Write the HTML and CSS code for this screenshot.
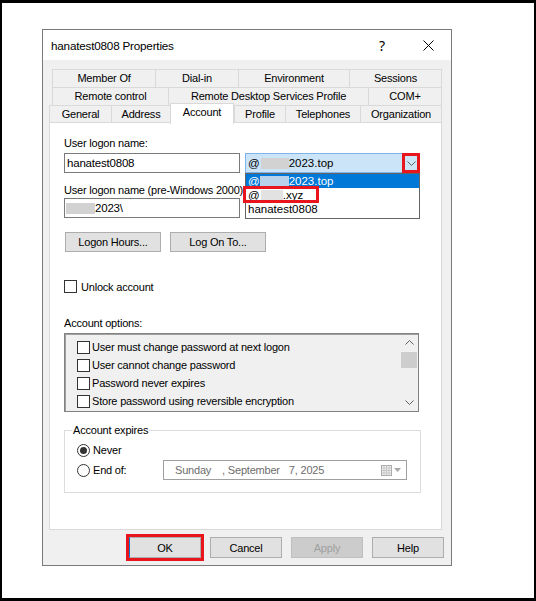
FILE: index.html
```html
<!DOCTYPE html>
<html lang="en">
<head>
    <meta charset="UTF-8">
    <meta name="viewport" content="width=device-width, initial-scale=1.0">
    <title>hanatest0808 Properties</title>
    <link rel="stylesheet" href="styles.css">
</head>
<body>
    <div class="screen">
        <div class="dialog">
            <div class="titlebar">
                <span class="title">hanatest0808 Properties</span>
                <span class="title-btn help">?</span>
                <span class="title-btn">
                    <svg width="11" height="11" viewBox="0 0 11 11"><path d="M0.5 0.5 L10.5 10.5 M10.5 0.5 L0.5 10.5" stroke="#000" stroke-width="1" fill="none"/></svg>
                </span>
            </div>

            <div class="body">
                <div class="tabs">
                    <div class="tab-row row1">
                        <div class="tab">Member Of</div>
                        <div class="tab">Dial-in</div>
                        <div class="tab">Environment</div>
                        <div class="tab">Sessions</div>
                    </div>
                    <div class="tab-row row2">
                        <div class="tab">Remote control</div>
                        <div class="tab">Remote Desktop Services Profile</div>
                        <div class="tab">COM+</div>
                    </div>
                    <div class="tab-row row3">
                        <div class="tab">General</div>
                        <div class="tab">Address</div>
                        <div class="tab active">Account</div>
                        <div class="tab">Profile</div>
                        <div class="tab">Telephones</div>
                        <div class="tab">Organization</div>
                    </div>
                </div>

                <div class="panel">
                    <div class="label">User logon name:</div>
                    <div class="pair">
                        <div class="textbox">hanatest0808</div>
                        <div class="combo">
                            <span>@</span><span class="blur blur-combo"></span><span>2023.top</span>
                            <span class="combo-arrow">
                                <svg width="9" height="5" viewBox="0 0 9 5"><path d="M0.5 0.5 L4.5 4.5 L8.5 0.5" stroke="#606060" fill="none"/></svg>
                            </span>
                            <div class="combo-list">
                                <div class="opt selected">@<span class="blur blur-sel"></span>2023.top</div>
                                <div class="opt">@<span class="blur blur-opt"></span>.xyz<span class="mark"></span></div>
                                <div class="opt">hanatest0808</div>
                            </div>
                        </div>
                    </div>

                    <div class="label label-second">User logon name (pre-Windows 2000):</div>
                    <div class="pair pair-second">
                        <div class="textbox"><span class="blur blur-pre"></span>2023\</div>
                        <div class="textbox textbox-right"></div>
                    </div>

                    <div class="btn-row">
                        <button class="btn btn-wide">Logon Hours...</button>
                        <button class="btn btn-wide">Log On To...</button>
                    </div>

                    <div class="check unlock"><span class="cbox"></span>Unlock account</div>

                    <div class="label label-options">Account options:</div>
                    <div class="listbox">
                        <div class="list-items">
                            <div class="check list-item"><span class="cbox"></span>User must change password at next logon</div>
                            <div class="check list-item"><span class="cbox"></span>User cannot change password</div>
                            <div class="check list-item"><span class="cbox"></span>Password never expires</div>
                            <div class="check list-item"><span class="cbox"></span>Store password using reversible encryption</div>
                        </div>
                        <div class="scrollbar">
                            <div class="sb-btn">
                                <svg width="9" height="5" viewBox="0 0 9 5"><path d="M0.5 4.5 L4.5 0.5 L8.5 4.5" stroke="#606060" fill="none"/></svg>
                            </div>
                            <div class="sb-thumb"></div>
                            <div class="sb-track"></div>
                            <div class="sb-btn">
                                <svg width="9" height="5" viewBox="0 0 9 5"><path d="M0.5 0.5 L4.5 4.5 L8.5 0.5" stroke="#606060" fill="none"/></svg>
                            </div>
                        </div>
                    </div>

                    <fieldset class="expires">
                        <legend>Account expires</legend>
                        <div class="radio-row first">
                            <span class="radio on"></span>Never
                        </div>
                        <div class="radio-row">
                            <span class="radio-label"><span class="radio"></span>End of:</span>
                            <div class="datebox">
                                <span class="d-day">Sunday</span>
                                <span class="d-month">, September</span>
                                <span class="d-date">7, 2025</span>
                                <span class="d-icon">
                                    <svg width="11" height="11" viewBox="0 0 11 11">
                                        <rect x="0.5" y="0.5" width="10" height="10" fill="#f4f4f4" stroke="#a8a8a8"/>
                                        <path d="M0.5 3 H10.5 M0.5 5.5 H10.5 M0.5 8 H10.5 M3 0.5 V10.5 M5.5 0.5 V10.5 M8 0.5 V10.5" stroke="#c4c4c4"/>
                                    </svg>
                                    <svg width="7" height="4" viewBox="0 0 7 4"><path d="M0 0 H7 L3.5 4 Z" fill="#a8a8a8"/></svg>
                                </span>
                            </div>
                        </div>
                    </fieldset>
                </div>

                <div class="actions">
                    <button class="btn btn-ok">OK</button>
                    <button class="btn">Cancel</button>
                    <button class="btn" disabled>Apply</button>
                    <button class="btn">Help</button>
                </div>
            </div>
        </div>
    </div>
</body>
</html>
```

FILE: styles.css
```css
* {
    box-sizing: border-box;
    margin: 0;
    padding: 0;
}

body {
    background: #fff;
    font-family: "Liberation Sans", Arial, sans-serif;
    font-size: 11px;
    letter-spacing: -0.2px;
    color: #000;
}

.screen {
    width: 536px;
    height: 601px;
    border: solid #000;
    border-width: 3px 2px 3px 2px;
    padding: 26px 0 0 40px;
    background: #fff;
}

.dialog {
    width: 410px;
    height: 537px;
    border: 1px solid #7a7a7a;
    background: #f0f0f0;
    display: flex;
    flex-direction: column;
}

.titlebar {
    height: 30px;
    background: #fff;
    display: flex;
    align-items: center;
}

.title {
    flex: 1;
    padding-left: 8px;
    font-size: 11.7px;
}

.title-btn {
    width: 46px;
    height: 30px;
    display: flex;
    align-items: center;
    justify-content: center;
}

.help {
    font-family: "Noto Sans", sans-serif;
    font-size: 14px;
}

.body {
    flex: 1;
    padding: 9px 9px 7px 6px;
    display: flex;
    flex-direction: column;
}

/* tabs */
.tab-row {
    display: grid;
    height: 18px;
}

.row1 {
    grid-template-columns: 103px 83px 111px 93px;
    margin-left: 3px;
}

.row2 {
    grid-template-columns: 116px 200px 74px;
    margin-left: 3px;
}

.row3 {
    grid-template-columns: 62px 59px 64px 51px 75px 82px;
    height: 17px;
}

.tab {
    border-top: 1px solid #d9d9d9;
    border-left: 1px solid #d9d9d9;
    background: #f0f0f0;
    text-align: center;
    line-height: 17px;
    white-space: nowrap;
}

.tab:last-child {
    border-right: 1px solid #d9d9d9;
}

.tab.active {
    background: #fff;
    margin-top: -2px;
    margin-bottom: -1px;
    border-right: 1px solid #d9d9d9;
    position: relative;
    z-index: 1;
}

.panel {
    height: 408px;
    background: #fff;
    border: 1px solid #d9d9d9;
    padding: 13px 0 0 14px;
}

.label {
    height: 14px;
    line-height: 14px;
    white-space: nowrap;
}

.label-second {
    margin-top: 10px;
}

.label-options {
    margin-top: 22px;
}

.pair {
    display: flex;
    gap: 5px;
    margin-top: 3px;
}

.pair-second {
    margin-top: 1px;
}

.textbox {
    width: 176px;
    height: 20px;
    border: 1px solid #7a7a7a;
    padding-left: 2px;
    line-height: 18px;
    display: flex;
    align-items: center;
    background: #fff;
    font-size: 11.5px;
}

.textbox-right {
    width: 175px;
}

.blur {
    display: inline-block;
    height: 11px;
    background: #d2d2d2;
}

.blur-pre {
    width: 29px;
    margin-left: -1px;
}

.blur-combo {
    width: 28px;
    margin: 0 0 0 1px;
}

.blur-sel {
    width: 29px;
    background: #b9d2ec;
}

.blur-opt {
    width: 22px;
    margin-left: 1px;
    background: #e2e2e2;
}

/* combo with open list */
.combo {
    width: 175px;
    height: 20px;
    border: 1px solid #7eb4ea;
    background: #cce4f7;
    padding-left: 2px;
    display: flex;
    align-items: center;
    position: relative;
    font-size: 11.5px;
    letter-spacing: 0;
}

.combo-arrow {
    position: absolute;
    right: -1px;
    top: -1px;
    width: 18px;
    height: 20px;
    border: 3px solid #e8161c;
    display: flex;
    align-items: center;
    justify-content: center;
}

.combo-list {
    position: absolute;
    top: 19px;
    left: -1px;
    right: -1px;
    z-index: 5;
    background: #fff;
    border: 1px solid #646464;
    padding-bottom: 2px;
}

.opt {
    height: 14px;
    line-height: 14px;
    padding-left: 2px;
    display: flex;
    align-items: center;
    position: relative;
}

.opt.selected {
    background: #0078d7;
    color: #fff;
}

.mark {
    position: absolute;
    left: -3px;
    top: -2px;
    width: 76px;
    height: 17px;
    border: 3px solid #e8161c;
}

/* buttons */
.btn {
    height: 21px;
    width: 72px;
    border: 1px solid #adadad;
    background: #e1e1e1;
    font-family: inherit;
    font-size: 11px;
    letter-spacing: -0.2px;
    color: #000;
}

.btn:disabled {
    background: #cccccc;
    border-color: #bfbfbf;
    color: #a0a0a0;
}

.btn-row {
    display: flex;
    gap: 9px;
    margin: 14px 0 0 1px;
}

.btn-wide {
    width: 96px;
    height: 20px;
}

.btn-ok {
    border-left-color: #0078d7;
    outline: 3px solid #e8161c;
}

.actions {
    display: flex;
    justify-content: flex-end;
    gap: 9px;
    margin: 7px -2px 0 0;
}

/* checkboxes */
.check {
    display: flex;
    align-items: center;
    white-space: nowrap;
}

.cbox {
    width: 13px;
    height: 13px;
    border: 1px solid #333;
    background: #fff;
    flex: none;
}

.unlock {
    height: 15px;
    margin-top: 27px;
    gap: 4px;
}

.listbox {
    width: 355px;
    height: 79px;
    margin-top: 3px;
    border: 1px solid #828282;
    box-shadow: inset 1px 1px 0 #a0a0a0;
    background: #f0f0f0;
    display: flex;
}

.list-items {
    flex: 1;
    padding: 4px 0 0 12px;
}

.list-item {
    height: 18px;
    gap: 2px;
}

.scrollbar {
    width: 16px;
    display: flex;
    flex-direction: column;
    margin-right: 1px;
}

.sb-btn {
    height: 17px;
    display: flex;
    align-items: center;
    justify-content: center;
}

.sb-thumb {
    height: 16px;
    background: #cdcdcd;
    margin-top: 1px;
}

.sb-track {
    flex: 1;
}

/* account expires */
.expires {
    width: 357px;
    height: 70px;
    margin-top: 11px;
    border: 1px solid #dcdcdc;
    padding: 0 0 0 7px;
}

.expires legend {
    padding: 0 1px;
    line-height: 14px;
}

.radio-row {
    display: flex;
    align-items: center;
    height: 20px;
    margin: 0 0 0 5px;
}

.radio-row.first {
    height: 14px;
    margin-top: 6px;
    margin-bottom: 3px;
    gap: 3px;
}

.radio-label {
    width: 86px;
    display: flex;
    align-items: center;
    gap: 3px;
}

.radio {
    width: 13px;
    height: 13px;
    border: 1px solid #333;
    border-radius: 50%;
    background: #fff;
    display: flex;
    align-items: center;
    justify-content: center;
    flex: none;
}

.radio.on::after {
    content: "";
    width: 7px;
    height: 7px;
    border-radius: 50%;
    background: #333;
}

.datebox {
    width: 244px;
    height: 20px;
    border: 1px solid #a0a0a0;
    background: #fff;
    color: #6d6d6d;
    display: flex;
    align-items: center;
    padding-left: 11px;
    white-space: nowrap;
}

.d-month {
    margin-left: 11px;
}

.d-date {
    margin-left: 9px;
}

.d-icon {
    margin-left: auto;
    margin-right: 5px;
    display: flex;
    align-items: center;
    gap: 2px;
}
```
